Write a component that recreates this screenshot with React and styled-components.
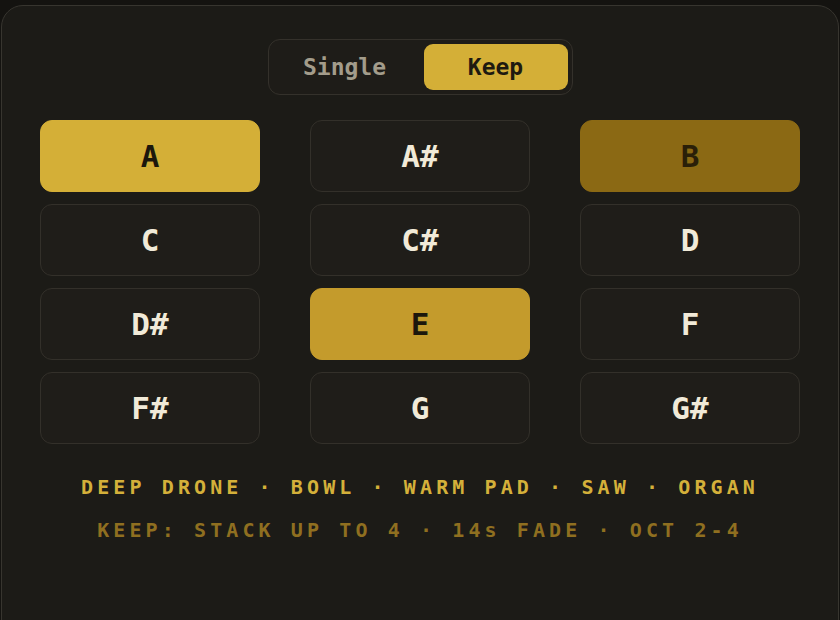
import React, { useState } from 'react';
import styled, { createGlobalStyle } from 'styled-components';

const GlobalStyle = createGlobalStyle`
  html, body {
    margin: 0;
    padding: 0;
    background: #141310;
    overflow: hidden;
  }
  body {
    font-family: "DejaVu Sans Mono", "Liberation Mono", monospace;
  }
`;

// 전체 패널
const Panel = styled.div`
  box-sizing: border-box;
  margin: 5px 1px 0 1px;
  width: 838px;
  height: 640px;
  background: #1c1b17;
  border: 1px solid #37352f;
  border-radius: 22px;
  padding: 33px 38px 0;
  display: flex;
  flex-direction: column;
  align-items: center;
`;

const Toggle = styled.div`
  box-sizing: border-box;
  display: flex;
  gap: 7px;
  padding: 4px;
  width: 305px;
  height: 56px;
  background: #1e1c18;
  border: 1px solid #34312b;
  border-radius: 12px;
`;

const ToggleButton = styled.button`
  flex: 1;
  border: none;
  border-radius: 9px;
  font-family: inherit;
  font-size: 23px;
  font-weight: 700;
  background: ${(p) => (p.$on ? '#d4af37' : 'transparent')};
  color: ${(p) => (p.$on ? '#1e1a10' : '#a39c8b')};
  cursor: pointer;
`;

const KeyGrid = styled.div`
  margin-top: 25px;
  width: 100%;
  display: grid;
  grid-template-columns: repeat(3, 220px);
  justify-content: space-between;
  row-gap: 12px;
`;

const tones = {
  off: { bg: '#1f1d19', border: '#33302a', fg: '#f1ead8' },
  main: { bg: '#d4af37', border: '#d4af37', fg: '#1c170c' },
  held: { bg: '#c49b2c', border: '#c49b2c', fg: '#1c170c' },
  dim: { bg: '#8b6914', border: '#8b6914', fg: '#2a1f08' },
};

const Key = styled.button`
  box-sizing: border-box;
  height: 72px;
  border-radius: 12px;
  border: 1px solid ${(p) => tones[p.$tone].border};
  background: ${(p) => tones[p.$tone].bg};
  color: ${(p) => tones[p.$tone].fg};
  font-family: inherit;
  font-size: 31px;
  font-weight: 700;
  cursor: pointer;
`;

const Info = styled.div`
  font-size: 20px;
  letter-spacing: 4.1px;
  font-weight: ${(p) => (p.$sub ? 600 : 700)};
  color: ${(p) => (p.$sub ? '#8f6f20' : '#d4b03a')};
  margin-top: ${(p) => (p.$sub ? '19px' : '31px')};
  white-space: nowrap;
`;

const notes = ['A', 'A#', 'B', 'C', 'C#', 'D', 'D#', 'E', 'F', 'F#', 'G', 'G#'];
const initialTone = { A: 'main', B: 'dim', E: 'held' };

const App = () => {
  const [mode, setMode] = useState('keep');

  return (
    <>
      <GlobalStyle />
      <Panel>
        <Toggle>
          <ToggleButton $on={mode === 'single'} onClick={() => setMode('single')}>
            Single
          </ToggleButton>
          <ToggleButton $on={mode === 'keep'} onClick={() => setMode('keep')}>
            Keep
          </ToggleButton>
        </Toggle>
        <KeyGrid>
          {notes.map((n) => (
            <Key key={n} $tone={initialTone[n] || 'off'}>
              {n}
            </Key>
          ))}
        </KeyGrid>
        <Info>DEEP DRONE · BOWL · WARM PAD · SAW · ORGAN</Info>
        <Info $sub>KEEP: STACK UP TO 4 · 14s FADE · OCT 2-4</Info>
      </Panel>
    </>
  );
};

export default App;
